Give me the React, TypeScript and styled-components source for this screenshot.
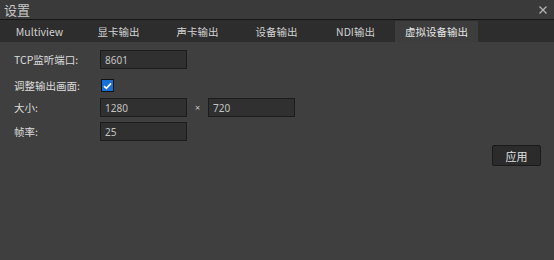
import React, { useState } from 'react';
import styled, { createGlobalStyle } from 'styled-components';

const GlobalStyle = createGlobalStyle`
  html, body {
    margin: 0;
    padding: 0;
    background: #3f3f3f;
  }
`;

const Window = styled.div`
  width: 554px;
  height: 260px;
  display: flex;
  flex-direction: column;
  background: #3f3f3f;
  font-family: 'Noto Sans CJK SC', 'Noto Sans', sans-serif;
  color: #dcdcdc;
  overflow: hidden;
`;

const TitleBar = styled.div`
  height: 19px;
  display: flex;
  align-items: center;
  justify-content: space-between;
  padding: 0 7px 0 4px;
  background: #3a3a3a;
  border-bottom: 1px solid #161616;
`;

const Title = styled.span`
  font-size: 13px;
  line-height: 19px;
  color: #c8c8c8;
`;

const CloseButton = styled.button`
  width: 9px;
  height: 9px;
  padding: 0;
  border: none;
  background: none;
  display: flex;
  align-items: center;
  justify-content: center;
  cursor: pointer;
`;

const TabBar = styled.div`
  height: 22px;
  display: flex;
  align-items: flex-end;
  background: #2d2d2d;
`;

const Tab = styled.button<{ $active?: boolean }>`
  min-width: 79px;
  height: 21px;
  padding: 0 10px;
  border: none;
  background: ${(p) => (p.$active ? '#3d3d3d' : 'transparent')};
  color: ${(p) => (p.$active ? '#e6e6e6' : '#d2d2d2')};
  font-family: inherit;
  font-size: 10.5px;
  line-height: 21px;
  white-space: nowrap;
  cursor: pointer;
`;

const Content = styled.div`
  flex: 1;
  display: flex;
  flex-direction: column;
  padding: 8px 13px 0 14px;
`;

const Row = styled.div<{ $top?: number }>`
  height: 19px;
  margin-top: ${(p) => p.$top ?? 0}px;
  display: flex;
  align-items: center;
`;

const Label = styled.span`
  width: 86px;
  font-size: 10.5px;
  color: #dcdcdc;
  white-space: nowrap;
`;

const Input = styled.input`
  box-sizing: border-box;
  width: 87px;
  height: 19px;
  padding: 0 4px;
  background: #303030;
  border: 1px solid #1c1c1c;
  color: #c4c4c4;
  font-family: 'Noto Sans', sans-serif;
  font-size: 10px;
  outline: none;
`;

const Times = styled.span`
  width: 21px;
  text-align: center;
  font-family: 'Noto Sans', sans-serif;
  font-size: 9px;
  color: #c8c8c8;
`;

const CheckBox = styled.span<{ $checked: boolean }>`
  box-sizing: border-box;
  width: 13px;
  height: 13px;
  margin-left: 1px;
  display: flex;
  align-items: center;
  justify-content: center;
  background: ${(p) => (p.$checked ? '#1670d6' : '#303030')};
  border: 1px solid #111;
  cursor: pointer;
`;

const Footer = styled.div`
  display: flex;
  justify-content: flex-end;
  margin-top: 4px;
`;

const ApplyButton = styled.button`
  box-sizing: border-box;
  width: 49px;
  height: 21px;
  padding: 0;
  background: #2b2b2b;
  border: 1px solid #1a1a1a;
  border-radius: 2px;
  color: #e0e0e0;
  font-family: inherit;
  font-size: 11px;
  cursor: pointer;
`;

const tabs = ['Multiview', '显卡输出', '声卡输出', '设备输出', 'NDI输出', '虚拟设备输出'];

const App: React.FC = () => {
  const [active, setActive] = useState(5);
  const [fit, setFit] = useState(true);

  return (
    <Window>
      <GlobalStyle />
      <TitleBar>
        <Title>设置</Title>
        <CloseButton title="关闭">
          <svg width="8" height="8" viewBox="0 0 8 8">
            <path d="M0.5 0.5 L7.5 7.5 M7.5 0.5 L0.5 7.5" stroke="#b4b4b4" strokeWidth="1.3" />
          </svg>
        </CloseButton>
      </TitleBar>

      <TabBar>
        {tabs.map((t, i) => (
          <Tab key={t} $active={i === active} onClick={() => setActive(i)}>
            {t}
          </Tab>
        ))}
      </TabBar>

      <Content>
        <Row>
          <Label>TCP监听端口:</Label>
          <Input defaultValue="8601" />
        </Row>
        <Row $top={7}>
          <Label>调整输出画面:</Label>
          <CheckBox $checked={fit} onClick={() => setFit(!fit)}>
            {fit && (
              <svg width="9" height="8" viewBox="0 0 9 8">
                <path d="M1 4.2 L3.4 6.4 L8 1.4" stroke="#fff" strokeWidth="1.6" fill="none" />
              </svg>
            )}
          </CheckBox>
        </Row>
        <Row $top={3}>
          <Label>大小:</Label>
          <Input defaultValue="1280" />
          <Times>×</Times>
          <Input defaultValue="720" />
        </Row>
        <Row $top={5}>
          <Label>帧率:</Label>
          <Input defaultValue="25" />
        </Row>
        <Footer>
          <ApplyButton>应用</ApplyButton>
        </Footer>
      </Content>
    </Window>
  );
};

export default App;
